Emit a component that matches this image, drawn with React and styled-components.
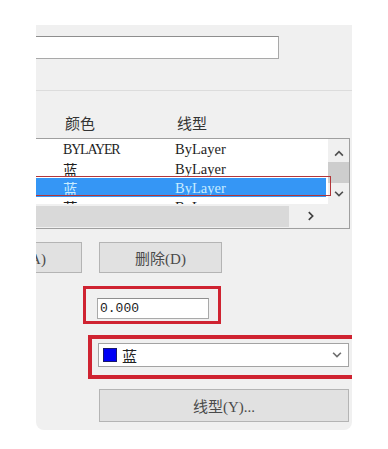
import React from "react";
import styled, { createGlobalStyle } from "styled-components";

const Global = createGlobalStyle`
  html, body { margin: 0; padding: 0; background: #ffffff; }
  #root { padding: 25px 0 0 36px; }
  * { box-sizing: border-box; }
`;

const FONT = `"Liberation Serif", "Noto Sans CJK SC", serif`;

const Panel = styled.div`
  width: 316px;
  height: 405px;
  background: #f0f0f0;
  border-radius: 0 0 8px 8px;
  overflow: hidden;
  display: flex;
  flex-direction: column;
  align-items: flex-start;
  padding-top: 11px;
  font-family: ${FONT};
  color: #1e1e1e;
`;

const TextInput = styled.div`
  flex-shrink: 0;
  margin-left: ${(p) => p.$left || 0}px;
  width: ${(p) => p.$width}px;
  height: ${(p) => p.$height || 23}px;
  background: #ffffff;
  border: 1px solid #a9a9a9;
  border-top-color: #8e8e8e;
  display: flex;
  align-items: center;
  padding-left: 2px;
  font-family: "Liberation Mono", "Noto Sans CJK SC", monospace;
  font-size: 13px;
  color: #222;
`;

const Separator = styled.div`
  align-self: stretch;
  height: 1px;
  background: #dcdcdc;
  margin-top: 31px;
`;

const Header = styled.div`
  display: grid;
  grid-template-columns: 112px 1fr;
  padding-left: 29px;
  margin-top: 21px;
  height: 20px;
  align-items: center;
  font-size: 15px;
  color: #333;
  align-self: stretch;
`;

const ListBox = styled.div`
  position: relative;
  flex-shrink: 0;
  margin-top: 6px;
  margin-left: -20px;
  width: 334px;
  height: 91px;
  background: #ffffff;
  border: 1px solid #9f9f9f;
  display: grid;
  grid-template-columns: 1fr 21px;
  grid-template-rows: 1fr 24px;
`;

const Rows = styled.div`
  overflow: hidden;
  padding-top: 1px;
`;

const Row = styled.div`
  display: grid;
  grid-template-columns: 46px 112px 1fr;
  height: 19px;
  align-items: center;
  font-size: 14px;
  margin-right: 2px;
  background: ${(p) => (p.$selected ? "#3596f5" : "transparent")};
  color: ${(p) => (p.$selected ? "#c8ecff" : "#1e1e1e")};
`;

const Cell = styled.span`
  white-space: nowrap;
  font-size: ${(p) => (p.$caps ? "14px" : "14.5px")};
  letter-spacing: ${(p) => (p.$caps ? "-1.2px" : "0")};
`;

const SelectionMark = styled.div`
  position: absolute;
  left: 0;
  top: 37px;
  width: 314px;
  height: 20px;
  border: 1px solid #b3363a;
  pointer-events: none;
`;

const VScroll = styled.div`
  background: #f0f0f0;
  display: flex;
  flex-direction: column;
  align-items: center;
`;

const ArrowBox = styled.div`
  height: ${(p) => p.$h}px;
  display: flex;
  align-items: flex-start;
  justify-content: center;
  width: 100%;
  padding-top: ${(p) => p.$pt || 0}px;
`;

const VThumb = styled.div`
  width: 100%;
  height: 21px;
  background: #cdcdcd;
`;

const HScroll = styled.div`
  background: #f0f0f0;
  display: flex;
  align-items: stretch;
`;

const HThumb = styled.div`
  width: 272px;
  background: #d9d9d9;
  margin: 2px 0 1px;
`;

const HArrow = styled.div`
  flex: 1;
  display: flex;
  align-items: center;
  justify-content: center;
  padding-left: 4px;
`;

const Corner = styled.div`
  background: #f0f0f0;
`;

const ButtonRow = styled.div`
  display: flex;
  gap: 17px;
  margin-top: 13px;
  margin-left: -77px;
  flex-shrink: 0;
`;

const Button = styled.div`
  flex-shrink: 0;
  margin-left: ${(p) => p.$left || 0}px;
  margin-top: ${(p) => p.$top || 0}px;
  width: ${(p) => p.$width}px;
  height: ${(p) => p.$height}px;
  background: #e1e1e1;
  border: 1px solid #b4b4b4;
  display: flex;
  align-items: center;
  justify-content: center;
  font-size: 15px;
  color: #4a4a4a;
  white-space: nowrap;
`;

const Highlight = styled.div`
  flex-shrink: 0;
  margin-left: ${(p) => p.$left}px;
  margin-top: ${(p) => p.$top}px;
  width: ${(p) => p.$width}px;
  height: ${(p) => p.$height}px;
  border: ${(p) => p.$thick}px solid #cf2331;
  border-right-width: ${(p) => (p.$open ? 0 : p.$thick)}px;
  padding: ${(p) => p.$pad};
`;

const Combo = styled.div`
  width: 251px;
  height: 24px;
  background: #ffffff;
  border: 1px solid #a3a3a3;
  display: flex;
  align-items: center;
  padding: 0 6px 0 4px;
  gap: 5px;
  font-size: 15px;
  color: #222;
`;

const Swatch = styled.span`
  width: 14px;
  height: 14px;
  background: ${(p) => p.$color};
  border: 1px solid #1a1a6a;
  flex-shrink: 0;
`;

const ComboText = styled.span`
  flex: 1;
`;

const Chevron = ({ dir = "down", size = 9, color = "#606060" }) => {
  const pts = {
    up: "1,6 4.5,2.5 8,6",
    down: "1,2.5 4.5,6 8,2.5",
    right: "2.5,1 6,4.5 2.5,8",
  }[dir];
  return (
    <svg width={size} height={size} viewBox="0 0 9 9">
      <polyline points={pts} fill="none" stroke={color} strokeWidth="1.5" />
    </svg>
  );
};

const rows = [
  { color: "BYLAYER", caps: true, type: "ByLayer" },
  { color: "蓝", type: "ByLayer" },
  { color: "蓝", type: "ByLayer", selected: true },
  { color: "蓝", type: "ByLayer" },
];

export default function App() {
  return (
    <>
      <Global />
      <Panel>
        <TextInput $left={-20} $width={263} />
        <Separator />
        <Header>
          <span>颜色</span>
          <span>线型</span>
        </Header>
        <ListBox>
          <Rows>
            {rows.map((r, i) => (
              <Row key={i} $selected={r.selected}>
                <span />
                <Cell $caps={r.caps}>{r.color}</Cell>
                <Cell>{r.type}</Cell>
              </Row>
            ))}
          </Rows>
          <VScroll>
            <ArrowBox $h={23} $pt={10}>
              <Chevron dir="up" size={10} color="#505050" />
            </ArrowBox>
            <VThumb />
            <ArrowBox $h={20} $pt={6}>
              <Chevron dir="down" size={10} color="#505050" />
            </ArrowBox>
          </VScroll>
          <HScroll>
            <HThumb />
            <HArrow>
              <Chevron dir="right" size={10} color="#404040" />
            </HArrow>
          </HScroll>
          <Corner />
          <SelectionMark />
        </ListBox>
        <ButtonRow>
          <Button $width={123} $height={31}>添加(A)</Button>
          <Button $width={123} $height={31}>删除(D)</Button>
        </ButtonRow>
        <Highlight $left={47} $top={13} $width={138} $height={38} $thick={3} $pad="9px 0 0 11px">
          <TextInput $width={112} $height={21}>0.000</TextInput>
        </Highlight>
        <Highlight $left={52} $top={11} $width={264} $height={44} $thick={4} $open $pad="4px 0 0 6px">
          <Combo>
            <Swatch $color="#0000f5" />
            <ComboText>蓝</ComboText>
            <Chevron dir="down" size={10} color="#707070" />
          </Combo>
        </Highlight>
        <Button $left={63} $top={10} $width={250} $height={33}>线型(Y)...</Button>
      </Panel>
    </>
  );
}
